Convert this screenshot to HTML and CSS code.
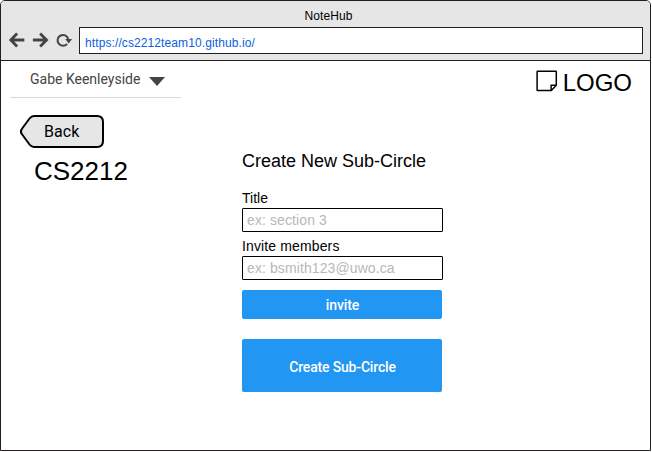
FILE: index.html
```html
<!DOCTYPE html>
<html lang="en">
<head>
<meta charset="utf-8">
<title>NoteHub</title>
<link rel="stylesheet" href="styles.css">
</head>
<body>
<div class="window">
  <header class="chrome">
    <div class="title"><span>NoteHub</span></div>
    <div class="toolbar">
      <svg class="nav" width="66" height="18" viewBox="0 0 66 18" fill="none" stroke="#444" stroke-width="2.8">
        <path d="M16.3 9H3.3M9.1 2.5L2.8 9L9.1 15.5"/>
        <path d="M24.9 9H38.4M32.1 2.5L38.6 9L32.1 15.5"/>
        <path d="M59.1 12.8A5.4 5.4 0 1 1 60.2 8" stroke-width="2"/>
        <path d="M57.2 8H64L60.8 12.6Z" fill="#444" stroke="none"/>
      </svg>
      <div class="address"><span>https://cs2212team10.github.io/</span></div>
    </div>
  </header>
  <div class="topbar">
    <div class="user">
      <span>Gabe Keenleyside</span>
      <svg width="16" height="9" viewBox="0 0 16 9"><path d="M0 0H16L8 9Z" fill="#444"/></svg>
    </div>
    <div class="logo">
      <svg width="22" height="22" viewBox="0 0 22 22" fill="none" stroke="#000" stroke-width="1.5" stroke-linejoin="round"><path d="M1.7 1.2H19.7Q20.3 1.2 20.3 1.8V15.3L15.3 20.5H1.7Q1.1 20.5 1.1 19.9V1.8Q1.1 1.2 1.7 1.2ZM15.1 20.2V15.2H20"/></svg>
      <span>LOGO</span>
    </div>
  </div>
  <main class="content">
    <aside class="side">
      <a class="back">
        <svg width="85" height="36" viewBox="0 0 85 36"><path d="M14 2H77Q83 2 83 8V27Q83 33 77 33H14Q11.5 33 9.5 30.5L1.8 20Q0 17.5 1.8 15L9.5 4.5Q11.5 2 14 2Z" fill="#e6e6e6" stroke="#000" stroke-width="2"/></svg>
        <span>Back</span>
      </a>
      <h1>CS2212</h1>
    </aside>
    <form class="form">
      <h2><span>Create New Sub-Circle</span></h2>
      <label><span>Title</span></label>
      <div class="field"><span class="hint-title">ex: section 3</span></div>
      <label><span class="invite-label">Invite members</span></label>
      <div class="field"><span class="hint-mail">ex: bsmith123@uwo.ca</span></div>
      <button type="button" class="invite">invite</button>
      <button type="button" class="create">Create Sub-Circle</button>
    </form>
  </main>
</div>
</body>
</html>
```
FILE: styles.css
```css
* { box-sizing: border-box; }
body { margin: 0; background: #fff; font-family: "Liberation Sans", Arial, sans-serif; color: #000; }
.window { width: 651px; height: 451px; border: 1px solid #231f20; border-radius: 5px 5px 0 0; overflow: hidden; background: #fff; }
.chrome { height: 60px; background: #e6e6e6; border-bottom: 1px solid #231f20; }
.title { height: 26px; padding-top: 7px; padding-left: 6px; text-align: center; font-size: 12px; line-height: 16px; letter-spacing: 0.1px; }
.toolbar { display: flex; padding-left: 7px; }
.nav { margin-top: 4px; margin-right: 5px; }
.address { width: 564px; height: 27px; border: 1px solid #231f20; background: #fff; padding-left: 5px; font-size: 12px; line-height: 31px; letter-spacing: 0.1px; color: #0b5fe0; }
.topbar { display: flex; justify-content: space-between; height: 53px; }
.user { display: flex; width: 171px; height: 37px; margin-left: 9px; padding-left: 20px; border-bottom: 1px solid #d9d9d9; font: 14px/36px Roboto, sans-serif; color: #444; }
.user svg { margin: 16px 0 0 9px; }
.logo { display: flex; padding: 8px 18px 0 0; font-size: 24px; line-height: 27px; }
.logo svg { margin: 1px 5px 0 0; }
.content { display: flex; }
.side { width: 241px; padding-left: 19px; }
.back { display: grid; width: 85px; height: 36px; }
.back svg, .back span { grid-area: 1 / 1; }
.back svg { overflow: visible; }
.back span { padding-left: 24px; font: 16px/35px Roboto, sans-serif; letter-spacing: 0.1px; z-index: 1; }
h1 { margin: 4px 0 0 14px; font-size: 26px; line-height: 34px; font-weight: normal; }
.form { width: 201px; padding-top: 36px; }
h2 { margin: 0; height: 41px; font-size: 18px; line-height: 22px; font-weight: normal; white-space: nowrap; }
label { display: block; height: 17px; font-size: 14px; line-height: 14px; }
.field { height: 24px; margin-bottom: 7px; border: 1px solid #000; border-radius: 1px; padding-left: 4px; font-size: 14px; line-height: 22px; letter-spacing: 0.1px; color: #b8b8b8; white-space: nowrap; }
.invite-label { letter-spacing: 0.13px; }
button { display: block; width: 200px; border: 0; border-radius: 2px; padding: 0; background: #2196f3; color: #fff; font: 500 14px Roboto, sans-serif; }
.invite { height: 29px; margin-top: 10px; padding-left: 1px; letter-spacing: -0.1px; }
.create { height: 53px; margin-top: 20px; padding: 3px 0 0 1px; letter-spacing: -0.17px; }
```
